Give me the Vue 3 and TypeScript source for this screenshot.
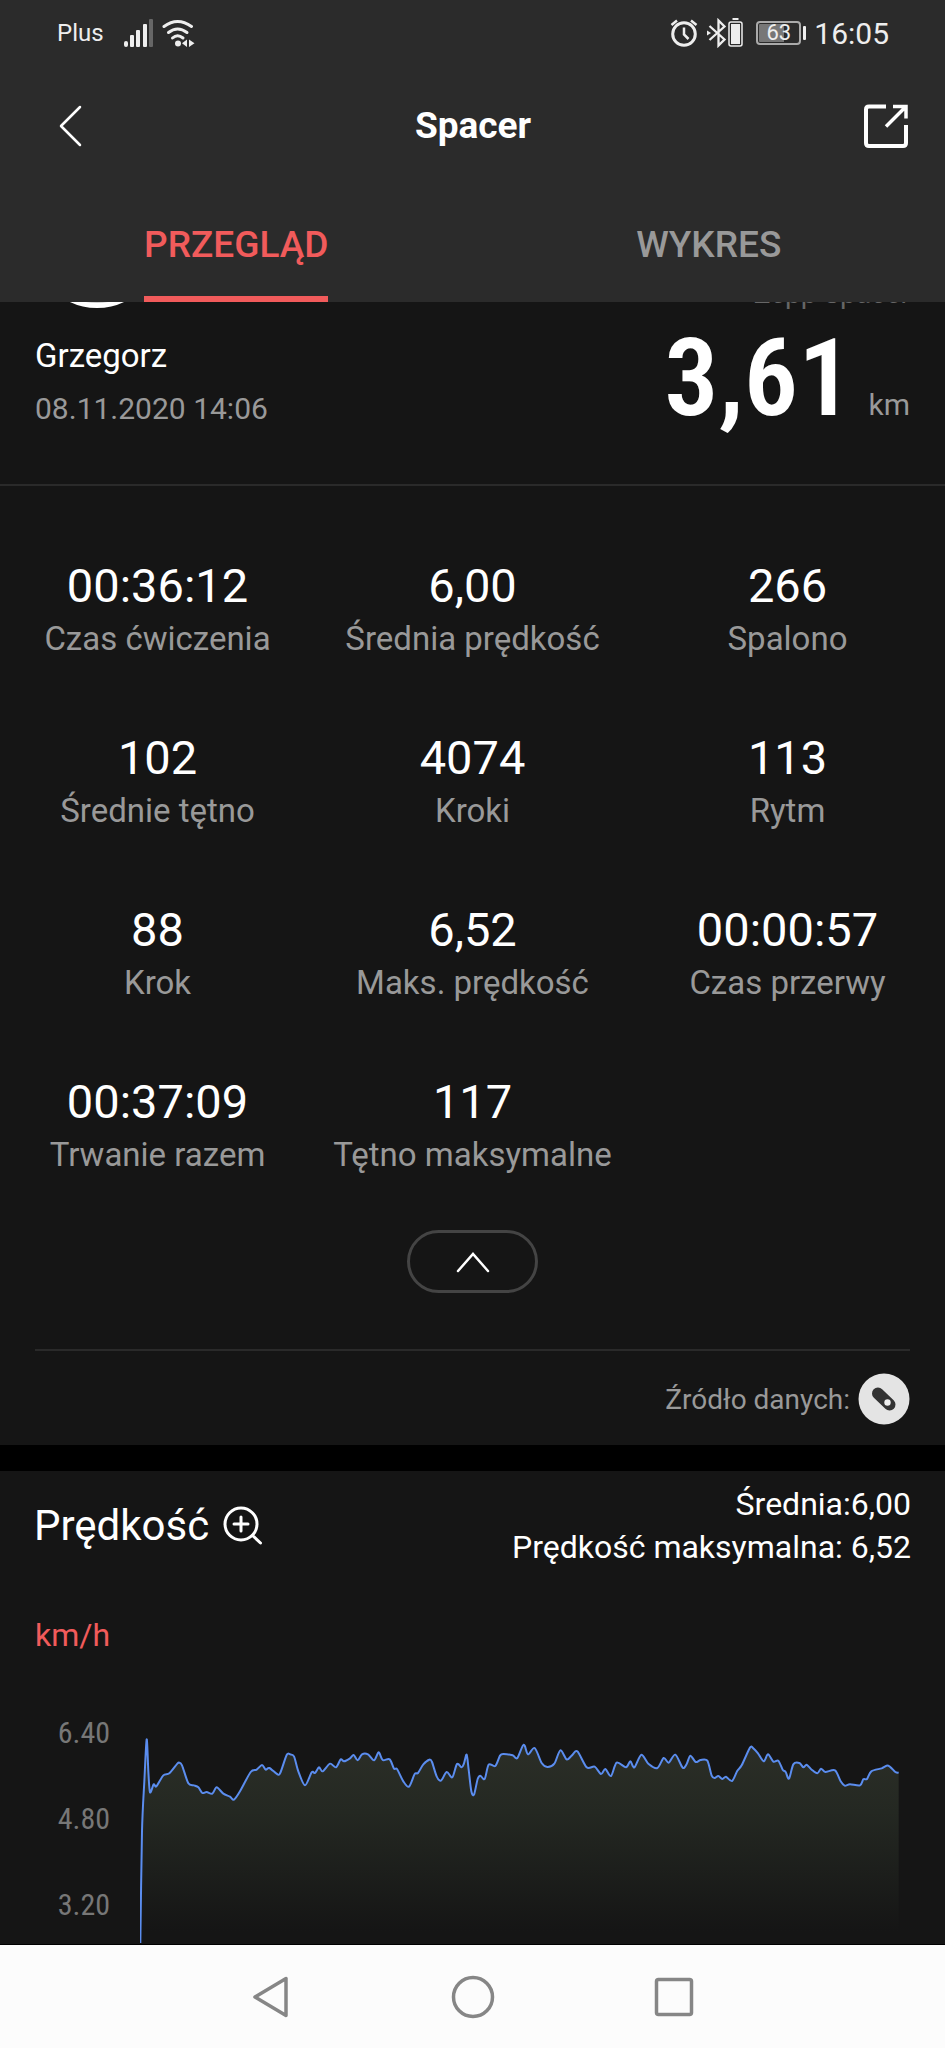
<script setup lang="ts">
import { computed, ref } from 'vue'

interface Stat {
  value: string
  label: string
}

type Point = [number, number]

const tabs: string[] = ['PRZEGLĄD', 'WYKRES']
const activeTab = ref<string>('PRZEGLĄD')

const stats: Stat[] = [
  { value: '00:36:12', label: 'Czas ćwiczenia' },
  { value: '6,00', label: 'Średnia prędkość' },
  { value: '266', label: 'Spalono' },
  { value: '102', label: 'Średnie tętno' },
  { value: '4074', label: 'Kroki' },
  { value: '113', label: 'Rytm' },
  { value: '88', label: 'Krok' },
  { value: '6,52', label: 'Maks. prędkość' },
  { value: '00:00:57', label: 'Czas przerwy' },
  { value: '00:37:09', label: 'Trwanie razem' },
  { value: '117', label: 'Tętno maksymalne' },
]

const expanded = ref<boolean>(true)
const visibleStats = computed<Stat[]>(() => (expanded.value ? stats : stats.slice(0, 6)))

const ticks: string[] = ['6.40', '4.80', '3.20']

const chartWidth = 2277
const chartHeight = 735

// Speed samples in chart units, y grows downwards
const samples: Point[] = [
  [1, 735], [6, 400], [13, 250], [20, 124], [25, 220], [30, 283], [41, 259], [49, 265], [70, 232],
  [88, 226], [112, 197], [118, 194], [126, 202], [145, 256], [162, 262], [175, 268], [187, 285],
  [200, 282], [217, 287], [230, 268], [250, 287], [270, 296], [282, 305], [300, 280], [332, 222],
  [350, 215], [366, 201], [377, 215], [388, 210], [414, 230], [422, 222], [440, 171], [450, 169],
  [462, 175], [475, 220], [495, 262], [515, 223], [525, 225], [537, 208], [548, 220], [570, 197],
  [588, 208], [602, 184], [612, 190], [630, 181], [641, 171], [653, 187], [666, 169], [684, 169],
  [702, 187], [716, 163], [728, 186], [749, 184], [762, 212], [771, 213], [790, 250], [807, 266],
  [824, 228], [834, 225], [850, 199], [868, 185], [876, 192], [890, 235], [903, 248], [920, 222],
  [937, 238], [951, 198], [965, 208], [972, 196], [980, 170], [986, 215], [994, 280], [1002, 290],
  [1013, 243], [1021, 233], [1034, 243], [1046, 200], [1066, 204], [1080, 173], [1090, 168],
  [1118, 172], [1132, 180], [1151, 140], [1164, 169], [1184, 150], [1205, 195], [1222, 207],
  [1243, 197], [1261, 157], [1280, 184], [1295, 173], [1312, 160], [1340, 208], [1364, 206],
  [1383, 228], [1396, 213], [1413, 234], [1430, 194], [1458, 208], [1471, 190], [1483, 208],
  [1504, 170], [1525, 197], [1552, 210], [1571, 180], [1586, 194], [1606, 170], [1628, 209],
  [1640, 198], [1651, 173], [1667, 192], [1682, 186], [1702, 188], [1715, 233], [1724, 240],
  [1735, 234], [1747, 243], [1758, 236], [1776, 249], [1792, 218], [1805, 202], [1830, 149],
  [1840, 151], [1854, 166], [1871, 190], [1884, 169], [1900, 191], [1915, 188], [1928, 215],
  [1937, 222], [1947, 242], [1960, 199], [1978, 195], [1990, 208], [2000, 200], [2015, 215],
  [2032, 226], [2043, 212], [2056, 222], [2085, 217], [2102, 250], [2114, 263], [2130, 259],
  [2160, 262], [2170, 244], [2181, 243], [2194, 220], [2225, 211], [2245, 203], [2266, 222],
  [2276, 224],
]

// Smooths the samples with cubic segments through every point
const linePath = computed<string>(() => {
  const parts: string[] = [`M${samples[0][0]} ${samples[0][1]}`]
  for (let i = 0; i < samples.length - 1; i++) {
    const before = samples[Math.max(i - 1, 0)]
    const from = samples[i]
    const to = samples[i + 1]
    const after = samples[Math.min(i + 2, samples.length - 1)]
    const c1x = from[0] + (to[0] - before[0]) / 7
    const c1y = from[1] + (to[1] - before[1]) / 7
    const c2x = to[0] - (after[0] - from[0]) / 7
    const c2y = to[1] - (after[1] - from[1]) / 7
    parts.push(`C${c1x.toFixed(1)} ${c1y.toFixed(1)} ${c2x.toFixed(1)} ${c2y.toFixed(1)} ${to[0]} ${to[1]}`)
  }
  return parts.join('')
})

const areaPath = computed<string>(() => `${linePath.value}V${chartHeight}H1Z`)
</script>

<template>
  <div class="app">
    <header class="top">
      <div class="status">
        <div class="status-side">
          <span class="carrier">Plus</span>
          <svg class="signal" width="30" height="28" viewBox="0 0 30 28" aria-hidden="true">
            <g fill="#eee">
              <rect x="1" y="22" width="4" height="6" rx="2" />
              <rect x="7" y="16" width="4" height="12" rx="1" />
              <rect x="13" y="11" width="4" height="17" rx="1" />
              <rect x="20" y="5" width="4" height="23" rx="1" />
            </g>
            <rect x="26" y="0" width="4" height="28" rx="1" fill="#666" />
          </svg>
          <svg width="34" height="28" viewBox="0 0 34 28" aria-hidden="true">
            <g fill="none" stroke="#eee" stroke-width="3" stroke-linecap="round">
              <path d="M3 7.500Q16.500-2.500 30.500 7.500" />
              <path d="M7.500 13.500Q16.500 6.500 26 13.500" />
              <path d="M11.500 19Q16.500 14.500 22 19" />
            </g>
            <circle cx="17" cy="24.500" r="3" fill="#eee" />
            <path d="M26 20.500V28L21 24.300ZM28 20.500V28L33.500 24.300Z" fill="#eee" />
          </svg>
        </div>
        <div class="status-side">
          <svg width="28" height="28" viewBox="0 0 28 28" fill="none" stroke="#eee" aria-hidden="true">
            <circle cx="14" cy="15" r="11.300" stroke-width="3" />
            <path d="M14 8.500V15.500L18.500 20" stroke-width="2.500" />
            <path d="M1.500 6L7 1.500M21 1.500L26.500 6" stroke-width="2.500" />
          </svg>
          <svg class="bluetooth" width="38" height="30" viewBox="0 0 38 30" fill="none" aria-hidden="true">
            <path d="M3.500 8L18.500 21.500L12.500 27.500V2.500L18.500 8.500L3.500 22" stroke="#eee" stroke-width="2.300" />
            <path d="M1 12.500L5 15L1 17.500Z" fill="#eee" />
            <rect x="23" y="4" width="13" height="24" rx="2" stroke="#eee" stroke-width="1.500" />
            <rect x="25" y="6" width="9" height="20" fill="#eee" />
            <path d="M26.500 1H32.500" stroke="#eee" stroke-width="2" />
          </svg>
          <span class="battery"><span class="battery-cell">63</span><span class="battery-tip"></span></span>
          <span class="clock">16:05</span>
        </div>
      </div>

      <div class="title-bar">
        <button class="icon-button" type="button" aria-label="Wstecz">
          <svg width="24" height="42" viewBox="0 0 24 42" aria-hidden="true">
            <path d="M22 2L3 21L22 40" fill="none" stroke="#fff" stroke-width="2.500" stroke-linecap="round" stroke-linejoin="round" />
          </svg>
        </button>
        <h1 class="title">Spacer</h1>
        <button class="icon-button" type="button" aria-label="Udostępnij">
          <svg width="44" height="44" viewBox="0 0 44 44" fill="none" stroke="#fff" stroke-width="4" aria-hidden="true">
            <path d="M22 2.500H5Q2 2.500 2 5.500V39Q2 42 5 42H39Q42 42 42 39V21" />
            <path d="M29 2.500H42V14.500M42 2.500L22 22.500" stroke-width="3.500" />
          </svg>
        </button>
      </div>

      <div class="tabs" role="tablist">
        <button
          v-for="tab in tabs"
          :key="tab"
          class="tab"
          :class="{ active: tab === activeTab }"
          type="button"
          role="tab"
          :aria-selected="tab === activeTab"
          @click="activeTab = tab"
        >
          <span class="tab-label">{{ tab }}</span>
        </button>
      </div>
    </header>

    <main class="content">
      <section class="summary">
        <div class="person">
          <div class="avatar"></div>
          <p class="name">Grzegorz</p>
          <time class="date" datetime="2020-11-08T14:06">08.11.2020 14:06</time>
        </div>
        <div class="distance">
          <p class="device">Zepp Spacer</p>
          <p class="distance-value"><strong class="number">3,61</strong><span class="unit">km</span></p>
        </div>
      </section>

      <section class="details">
        <dl class="stats">
          <div v-for="stat in visibleStats" :key="stat.label" class="stat">
            <dd class="stat-value">{{ stat.value }}</dd>
            <dt class="stat-label">{{ stat.label }}</dt>
          </div>
        </dl>
        <button class="toggle" type="button" aria-label="Zwiń" :aria-expanded="expanded" @click="expanded = !expanded">
          <svg width="34" height="22" viewBox="0 0 34 22" aria-hidden="true">
            <path d="M2 20L17 3L32 20" fill="none" stroke="#fff" stroke-width="2.500" stroke-linecap="round" />
          </svg>
        </button>
        <div class="source">
          <span>Źródło danych:</span>
          <svg width="52" height="52" viewBox="0 0 52 52" aria-hidden="true">
            <circle cx="26" cy="26" r="25.500" fill="#e4e4e4" />
            <path d="M20 20.500L31.500 31.500" stroke="#333" stroke-width="12" stroke-linecap="round" />
            <circle cx="29.500" cy="29.500" r="3.200" fill="#eee" />
          </svg>
        </div>
      </section>

      <section class="speed">
        <div class="speed-head">
          <div class="speed-title">
            <h2 class="speed-name">Prędkość</h2>
            <button class="icon-button" type="button" aria-label="Powiększ wykres">
              <svg width="40" height="40" viewBox="0 0 40 40" fill="none" stroke="#fff" stroke-width="3" stroke-linecap="round" aria-hidden="true">
                <circle cx="18" cy="18" r="16" />
                <path d="M18 11V25M11 18H25M29.500 29.500L37.500 37" />
              </svg>
            </button>
          </div>
          <div class="speed-totals">
            <p class="total">Średnia:6,00</p>
            <p class="total">Prędkość maksymalna: 6,52</p>
          </div>
        </div>
        <p class="axis-unit">km/h</p>
        <div class="chart">
          <div class="axis">
            <span v-for="tick in ticks" :key="tick" class="tick">{{ tick }}</span>
          </div>
          <svg class="plot" :viewBox="`0 0 ${chartWidth} ${chartHeight}`" preserveAspectRatio="none" role="img" aria-label="Wykres prędkości">
            <defs>
              <linearGradient id="speed-fill" gradientUnits="userSpaceOnUse" x1="0" y1="150" x2="0" y2="700">
                <stop offset="0" stop-color="#2b2e27" />
                <stop offset="0.350" stop-color="#242822" />
                <stop offset="1" stop-color="#151515" />
              </linearGradient>
            </defs>
            <path :d="areaPath" fill="url(#speed-fill)" />
            <path class="line" :d="linePath" />
          </svg>
        </div>
      </section>
    </main>

    <nav class="system-nav">
      <button class="icon-button" type="button" aria-label="Wstecz">
        <svg width="44" height="44" viewBox="0 0 44 44" aria-hidden="true">
          <path d="M36 3.500V40.500L5 22Z" fill="none" stroke="#868686" stroke-width="3.500" stroke-linejoin="round" />
        </svg>
      </button>
      <button class="icon-button" type="button" aria-label="Ekran główny">
        <svg width="44" height="44" viewBox="0 0 44 44" aria-hidden="true">
          <circle cx="22" cy="22" r="19.500" fill="none" stroke="#868686" stroke-width="3.500" />
        </svg>
      </button>
      <button class="icon-button" type="button" aria-label="Ostatnie aplikacje">
        <svg width="44" height="44" viewBox="0 0 44 44" aria-hidden="true">
          <rect x="4.500" y="4.500" width="35" height="35" rx="2" fill="none" stroke="#868686" stroke-width="3.500" />
        </svg>
      </button>
    </nav>
  </div>
</template>

<style>
body {
  margin: 0;
  background: #151515;
}
</style>

<style scoped>
.app {
  display: flex;
  flex-direction: column;
  height: 100vh;
  overflow: hidden;
  background: #151515;
  color: #fff;
  font-family: Roboto, "Noto Sans", sans-serif;
}

p,
h1,
h2,
dl,
dd {
  margin: 0;
}

svg {
  display: block;
  flex: none;
}

button {
  padding: 0;
  border: 0;
  background: none;
  color: inherit;
  font: inherit;
  cursor: pointer;
}

.top {
  flex: none;
  background: #2b2b2b;
}

.status {
  display: flex;
  justify-content: space-between;
  align-items: center;
  height: 66px;
  padding: 0 56px 0 57px;
  color: #eee;
}

.status-side {
  display: flex;
  align-items: center;
  gap: 8px;
}

.carrier {
  font-size: 24px;
}

.signal {
  margin-left: 11px;
}

.battery {
  display: flex;
  align-items: center;
  gap: 2px;
  margin-left: 4px;
}

.battery-cell {
  box-sizing: border-box;
  width: 45px;
  height: 24px;
  border: 2px solid #aaa;
  border-radius: 4px;
  background: linear-gradient(90deg, #777 63%, transparent 63%) content-box;
  padding: 1px;
  font-size: 22px;
  line-height: 18px;
  text-align: center;
}

.battery-tip {
  width: 3px;
  height: 14px;
  border-radius: 1px;
  background: #eee;
}

.clock {
  font-size: 30px;
}

.title-bar {
  display: flex;
  justify-content: space-between;
  align-items: center;
  height: 120px;
  padding: 0 37px 0 58px;
}

.icon-button {
  display: block;
}

.title {
  font-size: 37px;
  line-height: 48px;
  font-weight: 700;
}

.tabs {
  display: grid;
  grid-template-columns: 1fr 1fr;
  height: 116px;
}

.tab {
  display: flex;
  justify-content: center;
  color: #999;
  font-size: 37px;
  font-weight: 500;
}

.tab-label {
  box-sizing: border-box;
  height: 116px;
  border-bottom: 6px solid transparent;
  line-height: 118px;
}

.active .tab-label {
  border-color: #f15b5b;
  color: #f15b5b;
}

.content {
  flex: 1;
  min-height: 0;
  overflow: hidden;
}

/* The page is scrolled down, so the top of the summary is under the header */
.summary {
  display: flex;
  justify-content: space-between;
  margin-top: -118px;
  padding: 0 35px 55px;
  border-bottom: 2px solid #2a2a2a;
}

.avatar {
  box-sizing: border-box;
  width: 124px;
  height: 124px;
  border: 5px solid #fff;
  border-radius: 50%;
  background: #ccc;
}

.name {
  margin-top: 26px;
  font-size: 33px;
  line-height: 44px;
}

.date {
  display: block;
  margin-top: 11px;
  color: #999;
  font-size: 30px;
  line-height: 40px;
}

.distance {
  display: flex;
  flex-direction: column;
  align-items: flex-end;
  padding-top: 90px;
}

.device {
  color: #666;
  font-size: 28px;
  line-height: 40px;
}

.distance-value {
  display: flex;
  align-items: baseline;
  gap: 16px;
  margin-top: 14px;
}

.number {
  font-family: "Roboto Condensed", Roboto, sans-serif;
  font-size: 108px;
  line-height: 100px;
  font-weight: 600;
}

.unit {
  color: #999;
  font-size: 30px;
}

.details {
  padding: 72px 0 20px;
}

.stats {
  display: grid;
  grid-template-columns: repeat(3, 1fr);
  row-gap: 71px;
}

.stat {
  display: flex;
  flex-direction: column;
  align-items: center;
  gap: 5px;
}

.stat-value {
  font-size: 47px;
  line-height: 56px;
}

.stat-label {
  color: #999;
  font-size: 33px;
  line-height: 40px;
}

.toggle {
  display: flex;
  justify-content: center;
  align-items: center;
  width: 131px;
  height: 63px;
  margin: 55px auto 0;
  border: 3px solid #444;
  border-radius: 32px;
  box-sizing: border-box;
}

.source {
  display: flex;
  justify-content: flex-end;
  align-items: center;
  gap: 8px;
  margin: 56px 35px 0;
  padding-top: 22px;
  border-top: 2px solid #2a2a2a;
  color: #999;
  font-size: 28px;
}

.speed {
  padding-top: 12px;
  border-top: 26px solid #000;
}

.speed-head {
  display: flex;
  justify-content: space-between;
  align-items: center;
  padding: 0 34px;
}

.speed-title {
  display: flex;
  align-items: center;
  gap: 14px;
}

.speed-name {
  font-size: 42px;
  line-height: 56px;
  font-weight: 400;
}

.speed-totals {
  text-align: right;
}

.total {
  font-size: 32px;
  line-height: 43px;
}

.axis-unit {
  margin-top: 46px;
  padding: 0 35px;
  color: #f15b5b;
  font-size: 32px;
  line-height: 40px;
}

.chart {
  display: flex;
  gap: 30px;
  margin-top: 35px;
  padding-right: 46px;
}

.axis {
  display: flex;
  flex-direction: column;
  width: 110px;
  text-align: right;
}

.tick {
  color: #777;
  font-family: "Roboto Condensed", Roboto, sans-serif;
  font-size: 30px;
  line-height: 86px;
}

.plot {
  flex: 1;
  min-width: 0;
  height: 245px;
  margin-top: 8px;
}

.line {
  fill: none;
  stroke: #5b8def;
  stroke-width: 2;
  stroke-linejoin: round;
  vector-effect: non-scaling-stroke;
}

.system-nav {
  display: flex;
  flex: none;
  justify-content: center;
  align-items: center;
  gap: 157px;
  height: 103px;
  border-top: 1px solid #000;
  background: #fcfcfc;
}
</style>
